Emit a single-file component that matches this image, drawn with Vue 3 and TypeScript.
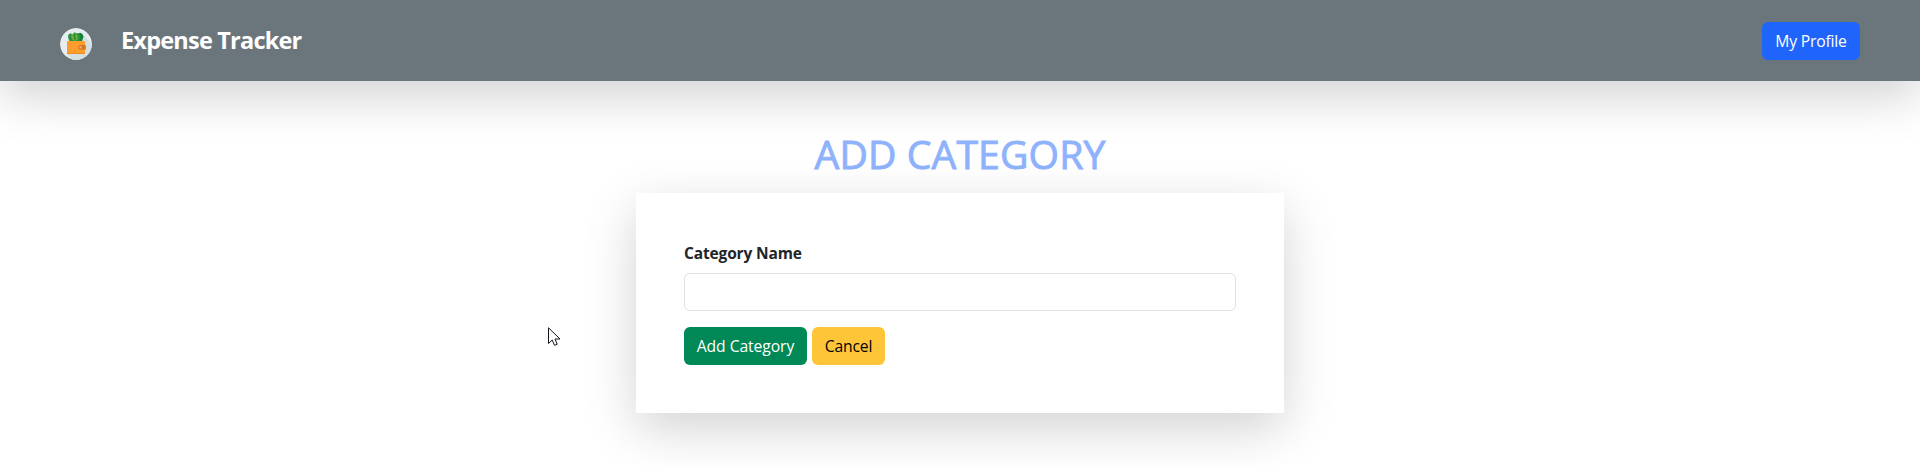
<script setup lang="ts">
import { ref } from 'vue'

const categoryName = ref('')
</script>

<template>
  <div class="page">
    <header class="navbar">
      <div class="brand">
        <svg class="logo" viewBox="0 0 32 32" aria-hidden="true">
          <defs>
            <clipPath id="disc"><circle cx="16" cy="16" r="16" /></clipPath>
          </defs>
          <g clip-path="url(#disc)">
            <circle cx="16" cy="16" r="16" fill="#e8eeef" />
            <path d="M22.5 6 33 17V33H13L7 26 25 24Z" fill="#d3dfe0" />
            <path d="M17.5 6.2 20 4.7 22.3 5.8 23.5 8.5 22.2 13H16Z" fill="#12813c" />
            <path d="M8 7.5 10 5.2 12.4 6.3 14.5 4.2 17 5.6 19 5 20.6 9 20.5 13H9.4L8.3 10.3Z" fill="#25923e" />
            <ellipse cx="14.5" cy="9" rx="3.2" ry="3.7" fill="#6cb13c" transform="rotate(-20 14.5 9)" />
            <path d="M15.8 7.2C14.4 6.3 12.9 7.2 14.2 8.6 15.9 9.3 16 11 13.7 10.8M14.3 6.4 15.1 11.8" fill="none" stroke="#26762f" stroke-width="0.8" />
            <rect x="7" y="13" width="18" height="13" rx="1" fill="#fd9d2c" />
            <path d="M7 25H25V25.3Q25 26 24.3 26H7.7Q7 26 7 25.3Z" fill="#f18b25" />
            <path d="M20.3 17H25.8V21.8H20.3Q18 21.4 18 19.4T20.3 17Z" fill="#d97722" />
            <circle cx="20.5" cy="19.4" r="1.1" fill="#e9bd89" />
          </g>
        </svg>
        <span class="brand-name">Expense Tracker</span>
      </div>
      <button class="btn btn-profile" type="button"><span>My Profile</span></button>
    </header>

    <main class="content">
      <h1 class="heading">ADD CATEGORY</h1>
      <form class="card" @submit.prevent>
        <label class="label" for="category-name"><span>Category Name</span></label>
        <input id="category-name" v-model="categoryName" class="field" type="text" />
        <div class="actions">
          <button class="btn btn-add" type="submit">Add Category</button>
          <button class="btn btn-cancel" type="button">Cancel</button>
        </div>
      </form>
    </main>

    <svg class="pointer" viewBox="0 0 13 20" aria-hidden="true">
      <path d="M.5 .8V16.5L4.2 13 6.5 18.3 9.2 17.2 7 12H12Z" fill="#fff" stroke="#15151f" stroke-width="1" />
    </svg>
  </div>
</template>

<style>
body {
  margin: 0;
  background: #fff;
}
</style>

<style scoped>
.page {
  position: relative;
  height: 465px;
  overflow: hidden;
  background: #fff;
  color: #212529;
  font-family: "Open Sans", "Noto Sans", sans-serif;
  font-size: 15.7px;
  line-height: 24px;
}

.navbar {
  box-sizing: border-box;
  display: flex;
  align-items: center;
  justify-content: space-between;
  height: 81px;
  padding: 0 60px;
  background: #6b767c;
  box-shadow: 0 16px 48px rgba(0, 0, 0, 0.175);
}

.brand {
  display: flex;
  align-items: center;
}

.logo {
  width: 32px;
  height: 32px;
  margin: 7px 29px 0 0;
}

.brand-name {
  margin-bottom: 2px;
  color: #fff;
  font-size: 23.5px;
  font-weight: 700;
  line-height: 36px;
  letter-spacing: -0.79px;
}

.btn {
  box-sizing: border-box;
  height: 38px;
  padding: 0;
  border: 0;
  border-radius: 6px;
  font: inherit;
  white-space: nowrap;
}

.btn-profile {
  width: 98px;
  background: #2065fb;
  color: #fff;
  letter-spacing: -0.2px;
}

.content {
  display: flex;
  flex-direction: column;
  align-items: center;
  padding-top: 49px;
}

.heading {
  margin: 0 0 15px;
  color: #8fb2fd;
  font-size: 39.2px;
  font-weight: 500;
  line-height: 48px;
  letter-spacing: 0.1px;
  -webkit-text-stroke: 0.9px #8fb2fd;
}

.card {
  box-sizing: border-box;
  display: flex;
  flex-direction: column;
  width: 648px;
  height: 220px;
  padding: 48px;
  background: #fff;
  box-shadow: 0 16px 48px rgba(0, 0, 0, 0.175);
}

.label {
  margin-bottom: 8px;
  font-size: 15.5px;
  font-weight: 700;
  letter-spacing: -0.15px;
}

.field {
  box-sizing: border-box;
  width: 100%;
  height: 38px;
  margin-bottom: 16px;
  padding: 6px 12px;
  border: 1px solid #dee0e6;
  border-radius: 6px;
  outline: 0;
  background: #fff;
  font: inherit;
}

.actions {
  display: flex;
  gap: 5px;
}

.btn-add {
  width: 123px;
  background: #008857;
  color: #fff;
  letter-spacing: -0.08px;
}

.btn-cancel {
  width: 73px;
  background: #ffc539;
  color: #000;
  letter-spacing: -0.2px;
}

.pointer {
  position: absolute;
  top: 327px;
  left: 548px;
  width: 13px;
  height: 20px;
}
</style>
